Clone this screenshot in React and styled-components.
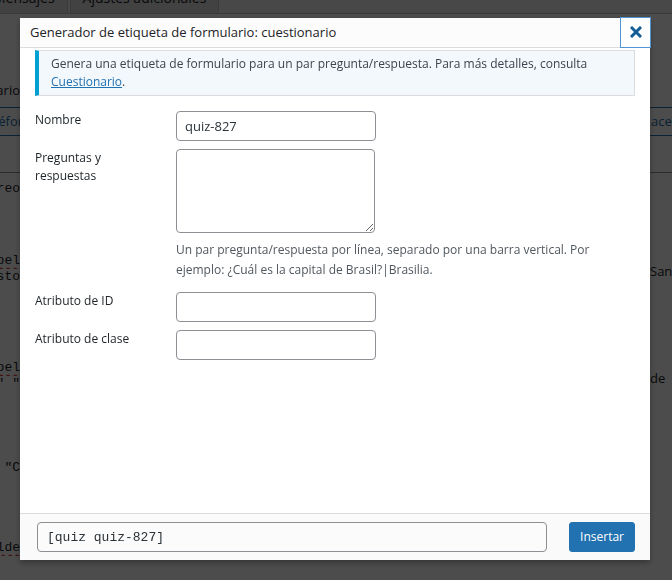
import React from 'react'
import styled, { createGlobalStyle } from 'styled-components'

const Global = createGlobalStyle`
  html, body {
    margin: 0;
    padding: 0;
    width: 672px;
    height: 580px;
    overflow: hidden;
    background: #fff;
  }
  * { box-sizing: border-box; }
`

// pagina de fondo (queda detras del overlay)
const Pagina = styled.div`
  width: 672px;
  height: 580px;
  overflow: hidden;
  background: #fff;
  font-family: "Open Sans", sans-serif;
  font-size: 12px;
  color: #1d2327;
`

const BarraPestanas = styled.div`
  display: flex;
  gap: 2px;
  height: 14px;
  border-bottom: 1px solid #c3c4c7;
  background: #f0f0f1;
  align-items: flex-end;
`

const Pestana = styled.div`
  height: 20px;
  margin-left: ${p => p.$ml || 0}px;
  padding: 0 12px;
  border: 1px solid #c3c4c7;
  border-bottom: none;
  background: #dcdcde;
  font-size: 14px;
  line-height: 8px;
  white-space: nowrap;
`

const Fila = styled.div`
  display: flex;
  justify-content: space-between;
  align-items: flex-start;
  height: ${p => p.$h || 16}px;
  margin-top: ${p => p.$mt || 0}px;
  font-size: 13px;
  line-height: ${p => p.$h || 16}px;
  border-top: ${p => (p.$linea ? '1px solid #8c8f94' : 'none')};
`

const Recorte = styled.div`
  width: ${p => p.$w}px;
  overflow: hidden;
  display: flex;
  justify-content: ${p => (p.$fin ? 'flex-end' : 'flex-start')};
  padding-top: ${p => p.$dy || 0}px;
  white-space: nowrap;
`

const Codigo1 = styled.span`
  flex-shrink: 0;
  font-family: "Liberation Mono", monospace;
  text-decoration: ${p => (p.$ondulado ? 'underline wavy #d63638' : 'none')};
  text-underline-offset: 3px;
`

const BotonEtiqueta = styled.span`
  display: inline-block;
  flex-shrink: 0;
  height: 29px;
  margin-left: ${p => p.$ml || 0}px;
  padding: 0 8px;
  border: 1px solid #2271b1;
  color: #2271b1;
  line-height: 27px;
  font-size: 13px;
`

const Overlay = styled.div`
  position: fixed;
  inset: 0;
  background: rgba(0, 0, 0, 0.7);
`

const Modal = styled.div`
  position: fixed;
  left: 20px;
  top: 18px;
  width: 630px;
  height: 542px;
  background: #fff;
  display: flex;
  flex-direction: column;
  box-shadow: 0 3px 6px rgba(0, 0, 0, 0.3);
  font-family: "Open Sans", sans-serif;
  color: #1d2327;
`

const Cabecera = styled.div`
  display: flex;
  align-items: center;
  justify-content: space-between;
  height: 30px;
  background: #fcfcfc;
  border-bottom: 1px solid #dcdcde;
`

const Titulo = styled.h1`
  margin: 0 0 0 10px;
  font-size: 13px;
  font-weight: 400;
  line-height: 29px;
  color: #1d2327;
`

const Cerrar = styled.button`
  width: 31px;
  height: 31px;
  margin: -1px -1px 0 0;
  padding: 0;
  border: 1px solid #4f94d4;
  background: #fff;
  display: flex;
  align-items: center;
  justify-content: center;
`

const Cuerpo = styled.div`
  flex: 1;
  padding: 2px 15px 0 15px;
`

const Aviso = styled.div`
  background: #f3f8fd;
  border: 1px solid #dcdcde;
  border-left: 4px solid #00a0d2;
  padding: 4px 12px;
  font-size: 12px;
  line-height: 18px;
  color: #3c434a;
`

const Enlace = styled.a`
  color: #2271b1;
  text-decoration: underline;
`

const Formulario = styled.div`
  display: grid;
  grid-template-columns: 141px 1fr;
  align-items: start;
  margin-top: 15px;
`

const Etiqueta = styled.label`
  width: 110px;
  font-size: 12px;
  line-height: 18px;
  color: #1d2327;
`

const Campo = styled.div`
  display: flex;
  flex-direction: column;
  margin-bottom: ${p => p.$mb || 0}px;
`

const Entrada = styled.input`
  width: 200px;
  height: 30px;
  padding: 0 8px;
  border: 1px solid #8c8f94;
  border-radius: 4px;
  background: #fff;
  font-family: "Open Sans", sans-serif;
  font-size: 13px;
  color: #2c3338;
  outline: none;
`

const AreaTexto = styled.textarea`
  width: 199px;
  height: 84px;
  border: 1px solid #8c8f94;
  border-radius: 4px;
  background: #fff;
  resize: vertical;
  outline: none;
`

const Ayuda = styled.p`
  margin: 7px 0 0;
  width: 430px;
  font-size: 12px;
  line-height: 20px;
  color: #50575e;
`

const Pie = styled.div`
  display: flex;
  align-items: center;
  justify-content: space-between;
  height: 47px;
  padding: 0 15px 0 17px;
  background: #fafafa;
  border-top: 1px solid #dcdcde;
`

const Codigo = styled.input`
  width: 510px;
  height: 30px;
  padding: 0 9px;
  border: 1px solid #8c8f94;
  border-radius: 4px;
  background: #fbfbfb;
  font-family: "Liberation Mono", "DejaVu Sans Mono", monospace;
  font-size: 13px;
  color: #2c3338;
  outline: none;
`

const Insertar = styled.button`
  height: 30px;
  padding: 0 10px;
  border: 1px solid #2271b1;
  border-radius: 3px;
  background: #2271b1;
  color: #fff;
  font-family: "Open Sans", sans-serif;
  font-size: 12px;
  line-height: 28px;
`

const lineasFondo = [
  { mt: 8, izq: 'Tu correo', der: '' },
  { mt: 56, izq: '<label> Papel', der: 'San', dy: 10, ond: true },
  { mt: 0, izq: 'sugeresto', der: '' },
  { mt: 75, izq: '<label> Papel', der: 'de', dy: 10, ond: true },
  { mt: 0, izq: '" "', der: '' },
  { mt: 68, izq: '  "C', der: '' },
  { mt: 64, izq: 'placeholde', der: '', ond: true },
]

function App() {
  return (
    <>
      <Global />
      <Pagina>
        <BarraPestanas>
          <Pestana $ml={-20}>Mensajes</Pestana>
          <Pestana>Ajustes adicionales</Pestana>
        </BarraPestanas>
        <Fila $mt={67} $h={18}>
          <Recorte $w={20} $fin>Formulario</Recorte>
          <Recorte $w={22}></Recorte>
        </Fila>
        <Fila $mt={8} $h={29}>
          <Recorte $w={20}><BotonEtiqueta $ml={-26}>teléfono</BotonEtiqueta></Recorte>
          <Recorte $w={22}><BotonEtiqueta $ml={-8}>aceptación</BotonEtiqueta></Recorte>
        </Fila>
        <Fila $mt={36} $linea $h={1} />
        {lineasFondo.map((l, i) => (
          <Fila key={i} $mt={l.mt} $h={16}>
            <Recorte $w={20} $fin>
              <Codigo1 $ondulado={l.ond}>{l.izq}</Codigo1>
            </Recorte>
            <Recorte $w={22} $dy={l.dy}>{l.der}</Recorte>
          </Fila>
        ))}
      </Pagina>
      <Overlay />
      <Modal>
        <Cabecera>
          <Titulo>Generador de etiqueta de formulario: cuestionario</Titulo>
          <Cerrar aria-label="Cerrar">
            <svg width="12" height="12" viewBox="0 0 12 12">
              <path d="M2 2 L10 10 M10 2 L2 10" stroke="#135e96" strokeWidth="3" strokeLinecap="square" />
            </svg>
          </Cerrar>
        </Cabecera>
        <Cuerpo>
          <Aviso>
            Genera una etiqueta de formulario para un par pregunta/respuesta. Para más detalles, consulta{' '}
            <Enlace href="#">Cuestionario</Enlace>.
          </Aviso>
          <Formulario>
            <Etiqueta>Nombre</Etiqueta>
            <Campo $mb={8}>
              <Entrada defaultValue="quiz-827" />
            </Campo>
            <Etiqueta>Preguntas y respuestas</Etiqueta>
            <Campo $mb={12}>
              <AreaTexto />
              <Ayuda>
                Un par pregunta/respuesta por línea, separado por una barra vertical. Por ejemplo: ¿Cuál es la capital de Brasil?|Brasilia.
              </Ayuda>
            </Campo>
            <Etiqueta>Atributo de ID</Etiqueta>
            <Campo $mb={8}>
              <Entrada />
            </Campo>
            <Etiqueta>Atributo de clase</Etiqueta>
            <Campo>
              <Entrada />
            </Campo>
          </Formulario>
        </Cuerpo>
        <Pie>
          <Codigo readOnly value="[quiz quiz-827]" />
          <Insertar>Insertar</Insertar>
        </Pie>
      </Modal>
    </>
  )
}

export default App
